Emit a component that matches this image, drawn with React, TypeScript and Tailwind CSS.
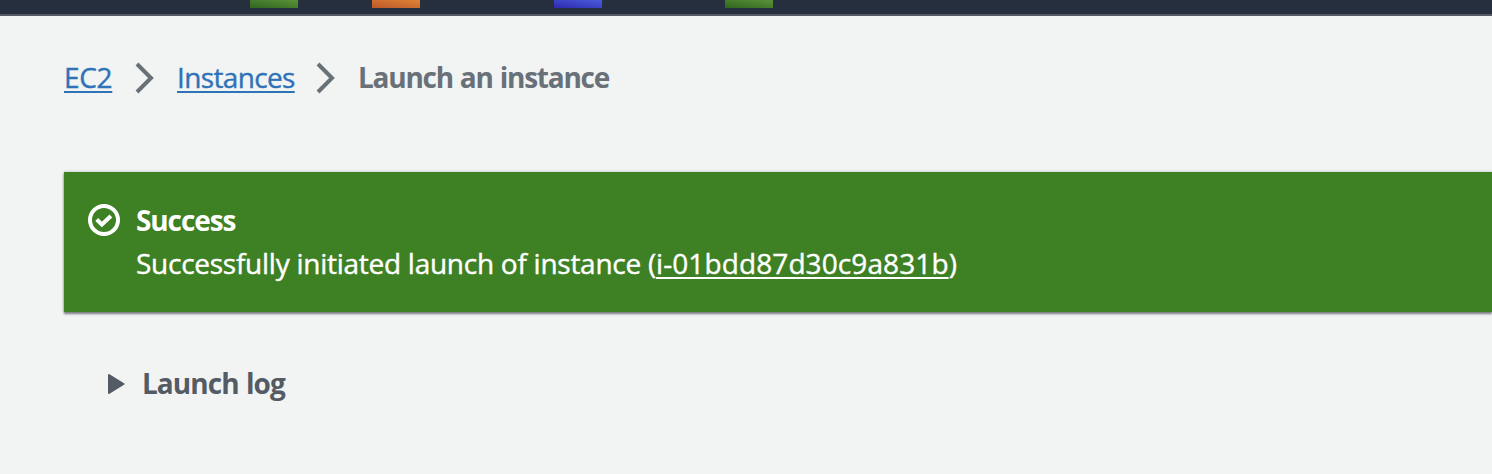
export default function App() {
  return (
    <div className="h-[474px] w-full overflow-hidden bg-[#f2f3f3] font-['Open_Sans','Noto_Sans',sans-serif] text-[28px] leading-[44px]">
      <header className="flex h-4 items-start border-b-2 border-[#545b64] bg-[#262f3e] pl-[250px]">
        <div className="h-2 w-12 bg-linear-to-tr from-[#2e6520] to-[#5b9339]" />
        <div className="ml-[74px] h-2 w-12 bg-linear-to-tr from-[#bd572b] to-[#dc8435]" />
        <div className="ml-[134px] h-2 w-12 bg-linear-to-tr from-[#2f27af] to-[#4a5cd9]" />
        <div className="ml-[123px] h-2 w-12 bg-linear-to-tr from-[#2e6520] to-[#5b9339]" />
      </header>
      <nav className="flex h-[156px] items-start pl-16 pt-[39px] text-[#687078]">
        <a className="w-12 whitespace-nowrap tracking-[-0.3px] text-[#2e73b8] underline decoration-2 underline-offset-[3px] [-webkit-text-stroke:0.4px_currentColor]">EC2</a>
        <svg className="ml-[23px] mt-[7px] h-8 w-5" viewBox="0 0 20 32" fill="none" stroke="currentColor" strokeWidth="4"><path d="M2 2l14 14L2 30" /></svg>
        <a className="ml-[22px] w-[118px] whitespace-nowrap tracking-[-0.65px] text-[#2e73b8] underline decoration-2 underline-offset-[3px] [-webkit-text-stroke:0.4px_currentColor]">Instances</a>
        <svg className="ml-[21px] mt-[7px] h-8 w-5" viewBox="0 0 20 32" fill="none" stroke="currentColor" strokeWidth="4"><path d="M2 2l14 14L2 30" /></svg>
        <span className="ml-[22px] whitespace-nowrap font-bold tracking-[-1.25px] [word-spacing:1px]">Launch an instance</span>
      </nav>
      <section className="ml-16 flex h-[140px] items-start bg-[#3e8024] pl-6 pt-[26px] text-white shadow-[0_2px_2px_#7b7f86,0_0_3px_#b8bcc0]">
        <svg className="mt-1.5 h-8 w-8" viewBox="0 0 32 32" fill="none" stroke="currentColor" strokeWidth="4"><circle cx="16" cy="16" r="14" /><path d="M8.7 15.5l5.2 5 9-8.5" /></svg>
        <div className="ml-4 whitespace-nowrap">
          <p className="font-bold tracking-[-1.1px]">Success</p>
          <p className="-mt-px tracking-[-0.26px] [-webkit-text-stroke:0.4px_currentColor]">Successfully initiated launch of instance (<a className="tracking-[0.1px] underline decoration-2 underline-offset-[3px]">i-01bdd87d30c9a831b</a>)</p>
        </div>
      </section>
      <div className="flex items-start pl-[108px] pt-[49px] text-[#545b64]">
        <svg className="mt-[13px] h-5 w-[17px]" viewBox="0 0 17 20" fill="currentColor" stroke="currentColor" strokeWidth="2" strokeLinejoin="round"><path d="M1 1L15.5 10L1 19z" /></svg>
        <span className="ml-[17px] font-bold tracking-[-0.95px] [word-spacing:1px]">Launch log</span>
      </div>
    </div>
  );
}
